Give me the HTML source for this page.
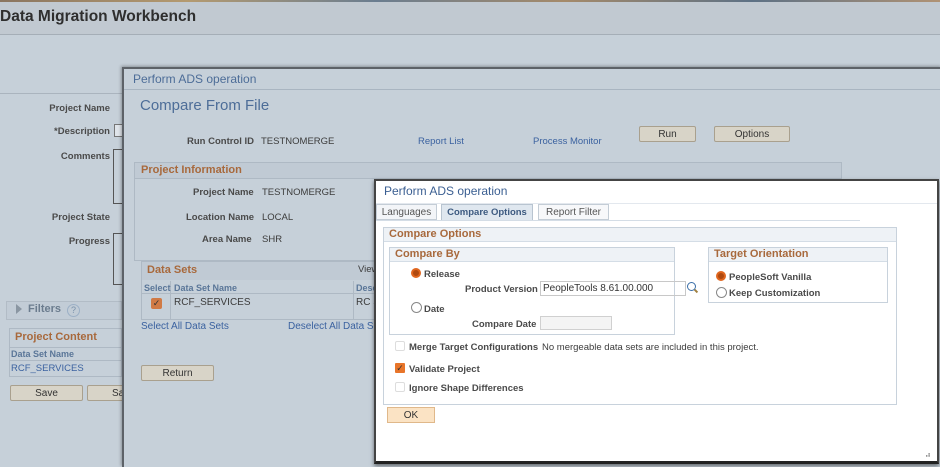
<!DOCTYPE html>
<html><head><style>
*{box-sizing:border-box;margin:0;padding:0}
body{width:940px;height:466px;overflow:hidden;background:#c6d0d9;font-family:"Liberation Sans",Arial,sans-serif;font-size:9.5px;color:#3c3c3c;position:relative}
.a{position:absolute;white-space:nowrap}
.b{font-weight:bold;color:#4a4a4a}
.lnk{color:#3b62a0}
.hd{color:#a8693c;font-weight:bold;font-size:11px}
.btn{position:absolute;background:#d8d4c8;border:1px solid #a9a08e;border-radius:2px;text-align:center;font-size:10px;color:#333;line-height:15px}
.box{position:absolute;border:1px solid #aeb9c4}
.r{text-align:right}
</style></head><body>
<div class="a" style="left:0;top:0;width:940px;height:2px;background:linear-gradient(90deg,#8a7560,#b49a70,#6a7d90,#a58a6a,#5d7185,#b09274)"></div>
<div class="a" style="left:0;top:2px;width:940px;height:33px;background:#c1c9d1;border-bottom:1px solid #a5aeb7"></div>
<div class="a" style="left:0;top:8px;font-size:15.5px;font-weight:bold;color:#2e2e2e">Data Migration Workbench</div>
<div class="a" style="left:0;top:93px;width:122px;height:1px;background:#aab4be"></div>
<div class="a b r" style="left:0;top:103px;width:110px">Project Name</div>
<div class="a b r" style="left:0;top:126px;width:110px">*Description</div>
<div class="a b r" style="left:0;top:151px;width:110px">Comments</div>
<div class="a b r" style="left:0;top:212px;width:110px">Project State</div>
<div class="a b r" style="left:0;top:236px;width:110px">Progress</div>
<div class="a" style="left:114px;top:124px;width:10px;height:13px;border:1px solid #777;background:#e0e5ea"></div>
<div class="a" style="left:113px;top:149px;width:10px;height:55px;border:1px solid #555"></div>
<div class="a" style="left:113px;top:233px;width:10px;height:52px;border:1px solid #555"></div>
<div class="a" style="left:6px;top:301px;width:116px;height:19px;border:1px solid #b2bcc6;background:#c2ccd6"></div>
<div class="a" style="left:16px;top:304px;width:0;height:0;border-left:6px solid #8a96a2;border-top:5px solid transparent;border-bottom:5px solid transparent"></div>
<div class="a" style="left:28px;top:303px;font-weight:bold;font-size:11px;color:#6b7c8e">Filters</div>
<div class="a" style="left:67px;top:304px;width:13px;height:13px;border:1px solid #9cb0c6;border-radius:50%;font-size:9px;color:#7890aa;text-align:center;line-height:11px">?</div>
<div class="a" style="left:9px;top:328px;width:113px;height:49px;border:1px solid #aeb9c4"></div>
<div class="a hd" style="left:15px;top:331px">Project Content</div>
<div class="a" style="left:10px;top:347px;width:112px;height:1px;background:#aeb9c4"></div>
<div class="a" style="left:11px;top:349px;font-size:9px;font-weight:bold;color:#5a7698">Data Set Name</div>
<div class="a" style="left:10px;top:360px;width:112px;height:1px;background:#aeb9c4"></div>
<div class="a lnk" style="left:11px;top:363px">RCF_SERVICES</div>
<div class="btn" style="left:10px;top:385px;width:73px;height:16px">Save</div>
<div class="btn" style="left:87px;top:385px;width:40px;height:16px;text-align:left;padding-left:24px">Sa</div>

<!-- middle dialog -->
<div class="a" style="left:122px;top:67px;width:820px;height:400px;border:2px solid #5d6268;border-right:none;border-bottom:none;background:#c6d0d9;box-shadow:-1px -1px 3px rgba(0,0,0,.3)"></div>
<div class="a" style="left:124px;top:69px;width:816px;height:21px;border-bottom:1px solid #a9b5c1"></div>
<div class="a" style="left:133px;top:72px;font-size:12px;color:#4d6d98">Perform ADS operation</div>
<div class="a" style="left:140px;top:97px;font-size:15px;color:#4d6d98">Compare From File</div>
<div class="a b" style="left:187px;top:136px">Run Control ID</div>
<div class="a" style="left:261px;top:136px">TESTNOMERGE</div>
<div class="a lnk" style="left:418px;top:136px">Report List</div>
<div class="a lnk" style="left:533px;top:136px">Process Monitor</div>
<div class="btn" style="left:639px;top:126px;width:57px;height:16px">Run</div>
<div class="btn" style="left:714px;top:126px;width:76px;height:16px">Options</div>
<div class="box" style="left:134px;top:162px;width:708px;height:99px"></div>
<div class="a" style="left:135px;top:163px;width:706px;height:16px;background:#c0cad4;border-bottom:1px solid #aeb9c4"></div>
<div class="a hd" style="left:141px;top:164px">Project Information</div>
<div class="a b" style="left:193px;top:187px">Project Name</div>
<div class="a" style="left:262px;top:187px">TESTNOMERGE</div>
<div class="a b" style="left:186px;top:212px">Location Name</div>
<div class="a" style="left:262px;top:212px">LOCAL</div>
<div class="a b" style="left:202px;top:234px">Area Name</div>
<div class="a" style="left:262px;top:234px">SHR</div>
<div class="box" style="left:141px;top:261px;width:240px;height:59px"></div>
<div class="a" style="left:142px;top:262px;width:238px;height:18px;background:#c0cad4"></div>
<div class="a hd" style="left:147px;top:264px">Data Sets</div>
<div class="a" style="left:358px;top:264px">View</div>
<div class="a" style="left:142px;top:293px;width:238px;height:1px;background:#aeb9c4"></div>
<div class="a" style="left:170px;top:281px;width:1px;height:38px;background:#aeb9c4"></div>
<div class="a" style="left:353px;top:281px;width:1px;height:38px;background:#aeb9c4"></div>
<div class="a" style="left:144px;top:283px;font-size:9px;font-weight:bold;color:#5a7698">Select</div>
<div class="a" style="left:174px;top:283px;font-size:9px;font-weight:bold;color:#5a7698">Data Set Name</div>
<div class="a" style="left:356px;top:283px;font-size:9px;font-weight:bold;color:#5a7698">Desc</div>
<div class="a" style="left:151px;top:298px;width:11px;height:11px;background:#d07a45;border-radius:2px;color:#333;font-size:9px;line-height:11px;text-align:center">✓</div>
<div class="a" style="left:174px;top:297px;font-size:10px">RCF_SERVICES</div>
<div class="a" style="left:356px;top:297px;font-size:10px">RC S</div>
<div class="a lnk" style="left:141px;top:321px;font-size:10px">Select All Data Sets</div>
<div class="a lnk" style="left:288px;top:321px;font-size:10px">Deselect All Data Se</div>
<div class="btn" style="left:141px;top:365px;width:73px;height:16px">Return</div>

<!-- front dialog -->
<div class="a" style="left:374px;top:179px;width:565px;height:285px;background:#fff;border:2px solid #444;border-bottom:3px solid #222;box-shadow:0 2px 4px rgba(0,0,0,.5)"></div>
<div class="a" style="left:384px;top:184px;font-size:12px;color:#3b5f92">Perform ADS operation</div>
<div class="a" style="left:376px;top:203px;width:561px;height:1px;background:#e3e8ee"></div>
<div class="a" style="left:376px;top:204px;width:61px;height:16px;border:1px solid #c4cdd6;background:#f3f5f8;text-align:center;line-height:15px;color:#555;font-size:10px">Languages</div>
<div class="a" style="left:441px;top:204px;width:92px;height:17px;border:1px solid #b8c4d0;border-bottom:none;background:#dfe7ef;text-align:center;line-height:15px;font-weight:bold;color:#3d5a80">Compare Options</div>
<div class="a" style="left:538px;top:204px;width:71px;height:16px;border:1px solid #c4cdd6;background:#f7f8fa;text-align:center;line-height:15px;color:#555;font-size:10px">Report Filter</div>
<div class="a" style="left:376px;top:220px;width:484px;height:1px;background:#d4dde6"></div>
<div class="a" style="left:383px;top:227px;width:514px;height:178px;border:1px solid #c8d2dc"></div>
<div class="a" style="left:384px;top:228px;width:512px;height:14px;background:#eef2f6;border-bottom:1px solid #d4dde6"></div>
<div class="a hd" style="left:389px;top:228px">Compare Options</div>
<div class="a" style="left:389px;top:247px;width:286px;height:88px;border:1px solid #c8d2dc"></div>
<div class="a" style="left:390px;top:248px;width:284px;height:14px;background:#eef2f6;border-bottom:1px solid #d4dde6"></div>
<div class="a hd" style="left:395px;top:248px">Compare By</div>
<div class="a" style="left:411px;top:268px;width:10px;height:10px;border-radius:50%;border:2px solid #e0661e;background:#b04a10"></div>
<div class="a b" style="left:424px;top:269px">Release</div>
<div class="a b" style="left:465px;top:284px">Product Version</div>
<div class="a" style="left:540px;top:281px;width:146px;height:15px;border:1px solid #c8c8c8;padding-left:2px;line-height:13px;color:#333;font-size:10px">PeopleTools 8.61.00.000</div>
<div class="a" style="left:687px;top:282px;width:9px;height:9px;border:1.5px solid #3a6ea8;border-radius:50%"></div>
<div class="a" style="left:694px;top:290px;width:4px;height:2px;background:#a08040;transform:rotate(45deg)"></div>
<div class="a" style="left:411px;top:302px;width:11px;height:11px;border-radius:50%;border:1px solid #888"></div>
<div class="a b" style="left:424px;top:304px">Date</div>
<div class="a b" style="left:472px;top:319px">Compare Date</div>
<div class="a" style="left:540px;top:316px;width:72px;height:14px;border:1px solid #d0d0d0;background:#f4f4f4"></div>
<div class="a" style="left:708px;top:247px;width:180px;height:56px;border:1px solid #c8d2dc"></div>
<div class="a" style="left:709px;top:248px;width:178px;height:14px;background:#eef2f6;border-bottom:1px solid #d4dde6"></div>
<div class="a hd" style="left:714px;top:248px">Target Orientation</div>
<div class="a" style="left:716px;top:271px;width:10px;height:10px;border-radius:50%;border:2px solid #e0661e;background:#b04a10"></div>
<div class="a b" style="left:729px;top:272px">PeopleSoft Vanilla</div>
<div class="a" style="left:716px;top:287px;width:11px;height:11px;border-radius:50%;border:1px solid #888"></div>
<div class="a b" style="left:729px;top:288px">Keep Customization</div>
<div class="a" style="left:395px;top:341px;width:10px;height:10px;border:1px solid #ddd;border-radius:2px"></div>
<div class="a b" style="left:409px;top:342px">Merge Target Configurations</div>
<div class="a" style="left:542px;top:342px">No mergeable data sets are included in this project.</div>
<div class="a" style="left:395px;top:363px;width:10px;height:10px;background:#e8752a;border-radius:1px;color:#333;font-size:9px;line-height:10px;text-align:center">✓</div>
<div class="a b" style="left:409px;top:364px">Validate Project</div>
<div class="a" style="left:395px;top:382px;width:10px;height:10px;border:1px solid #ddd;border-radius:2px"></div>
<div class="a b" style="left:409px;top:383px">Ignore Shape Differences</div>
<div class="a" style="left:387px;top:407px;width:48px;height:16px;background:#fbe3c4;border:1px solid #e0b88a;text-align:center;line-height:15px;font-size:10px;color:#333">OK</div>
<div class="a" style="left:925px;top:448px;font-size:8px;color:#333">⣠</div>
</body></html>
